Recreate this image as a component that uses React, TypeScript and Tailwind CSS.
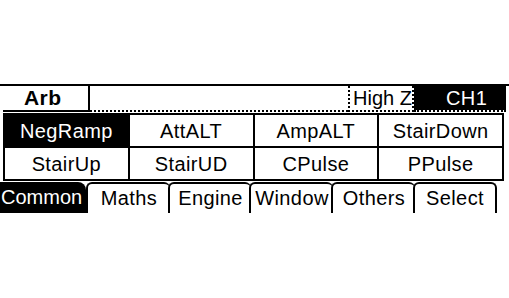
import React from 'react';

const cells = [
  ['NegRamp', 'AttALT', 'AmpALT', 'StairDown'],
  ['StairUp', 'StairUD', 'CPulse', 'PPulse'],
];

const tabs = [
  { label: 'Common', w: 'w-[86px]' },
  { label: 'Maths', w: 'w-[84px]' },
  { label: 'Engine', w: 'w-[83px]' },
  { label: 'Window', w: 'w-[84px]' },
  { label: 'Others', w: 'w-[84px]' },
  { label: 'Select', w: 'w-[84px]' },
];

export default function App() {
  return (
    <div className="w-[509px] h-[298px] bg-white pt-[84px] text-black tracking-[0.4px] font-['Liberation_Sans',Arial,sans-serif]">
      {/* top rule */}
      <div className="h-[2px] bg-black" />

      {/* header row */}
      <div className="flex h-[26px] pl-[3px] pr-[3px]">
        <div className="w-[87px] border-r-2 border-b-2 border-black pl-[21px] text-[21px] font-bold leading-[24px]">
          Arb
        </div>
        <div className="flex-1 border-b-2 border-dotted border-black" />
        <div className="w-[66px] border-l-2 border-r-2 border-b-2 border-dotted border-black pl-[3px] text-[20px] leading-[24px] tracking-normal">
          High Z
        </div>
        <div className="w-[92px] bg-black bg-clip-padding border-b-2 border-dotted border-black pl-[32px] text-[20px] leading-[24px] text-white">
          CH1
        </div>
      </div>

      {/* function grid */}
      <div className="mt-[1px] ml-[3px] w-[501px] grid grid-cols-4 gap-[2px] bg-black p-[2px]">
        {cells.flat().map((c, i) => (
          <div
            key={c}
            className={
              'h-[31px] flex items-center justify-center text-[20px] ' +
              (i === 0 ? 'bg-black text-white' : 'bg-white')
            }
          >
            {c}
          </div>
        ))}
      </div>

      {/* soft key tabs */}
      <div className="flex h-[31px] mt-[1px]">
        {tabs.map((t, i) =>
          i === 0 ? (
            <div
              key={t.label}
              className={`${t.w} bg-black text-white rounded-tr-[8px] pl-[1px] text-[20px] leading-[30px] tracking-normal`}
            >
              {t.label}
            </div>
          ) : (
            <div
              key={t.label}
              className={
                `${t.w} border-t-2 border-l-2 border-black rounded-tl-[6px] rounded-tr-[6px] text-center text-[20px] leading-[28px] ` +
                (i === tabs.length - 1 ? 'border-r-2' : '-mr-[2px]')
              }
            >
              {t.label}
            </div>
          )
        )}
      </div>
    </div>
  );
}
